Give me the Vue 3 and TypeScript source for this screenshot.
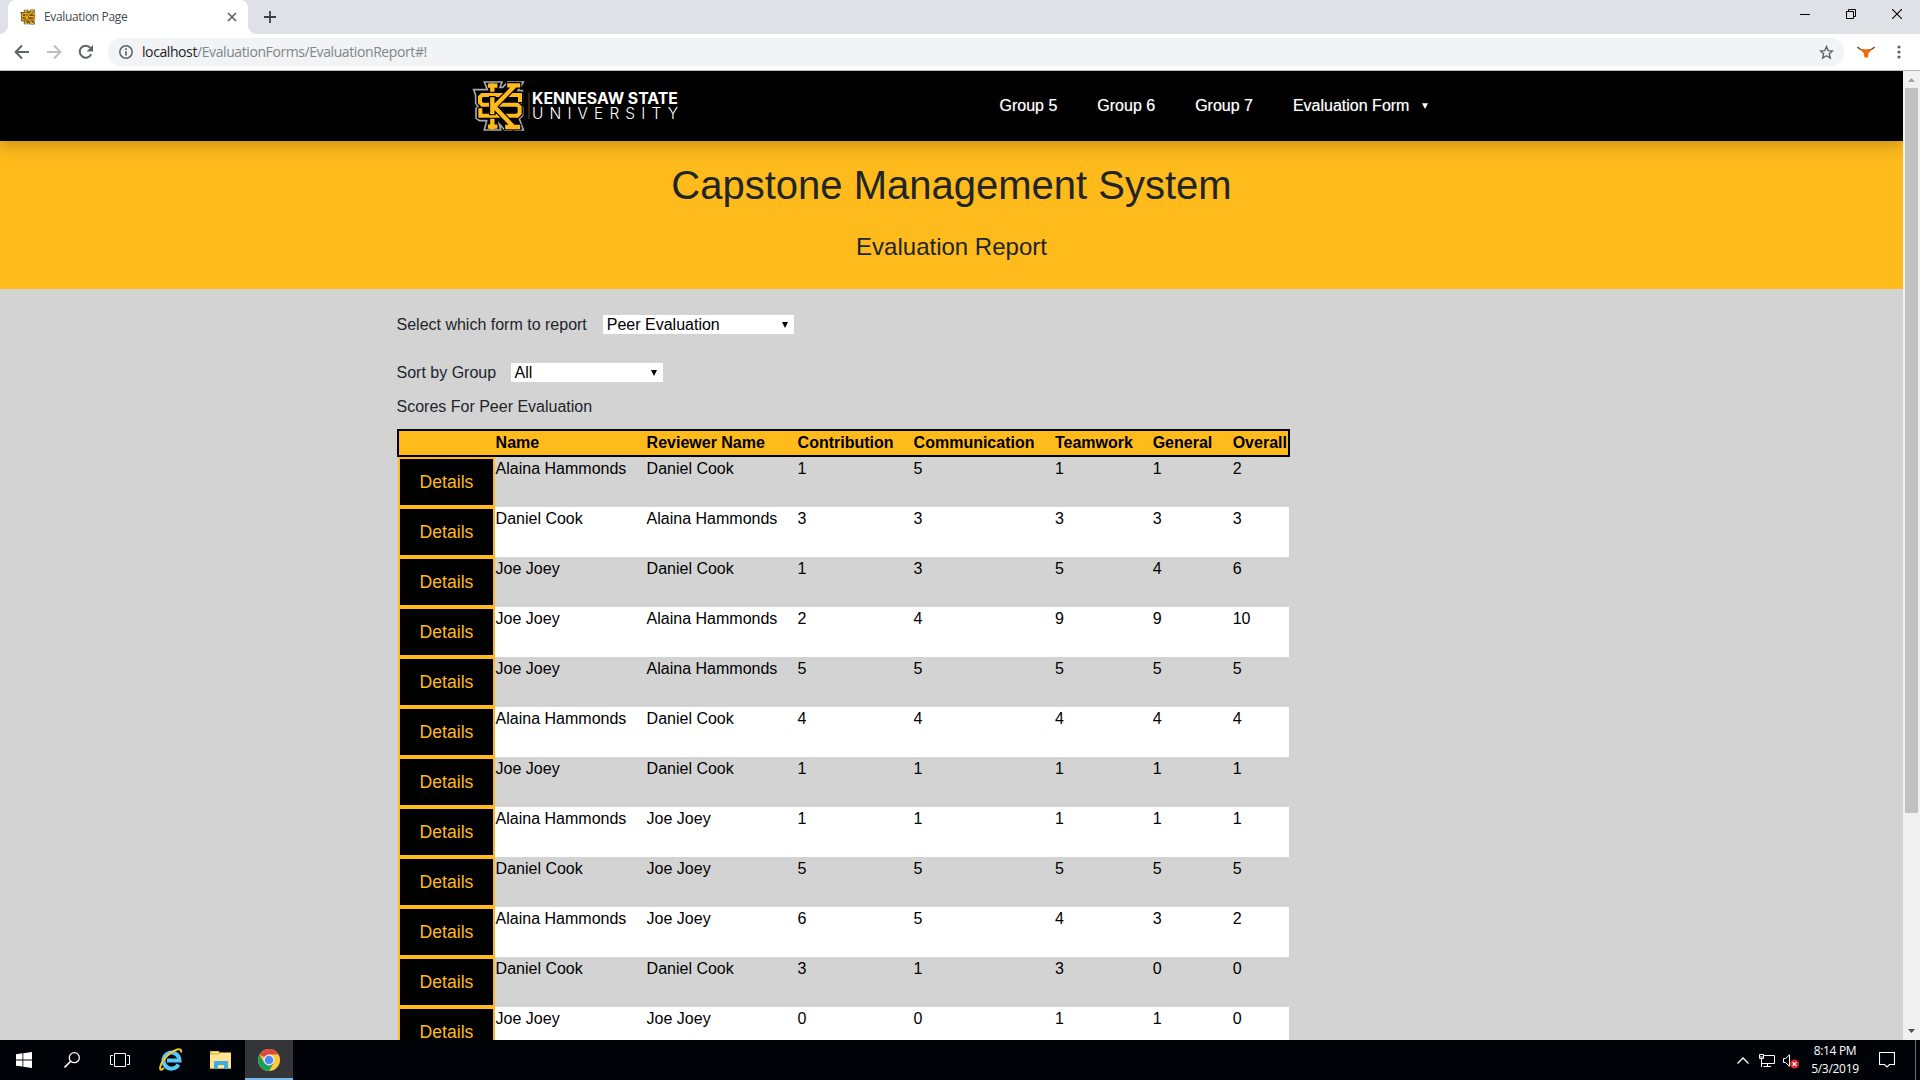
<script setup lang="ts">
interface Score {
  name: string
  reviewer: string
  marks: number[]
}

const columns: string[] = ['', 'Name', 'Reviewer Name', 'Contribution', 'Communication', 'Teamwork', 'General', 'Overall']
const groups: string[] = ['Group 5', 'Group 6', 'Group 7']

const A = 'Alaina Hammonds'
const D = 'Daniel Cook'
const J = 'Joe Joey'

const scores: Score[] = [
  { name: A, reviewer: D, marks: [1, 5, 1, 1, 2] },
  { name: D, reviewer: A, marks: [3, 3, 3, 3, 3] },
  { name: J, reviewer: D, marks: [1, 3, 5, 4, 6] },
  { name: J, reviewer: A, marks: [2, 4, 9, 9, 10] },
  { name: J, reviewer: A, marks: [5, 5, 5, 5, 5] },
  { name: A, reviewer: D, marks: [4, 4, 4, 4, 4] },
  { name: J, reviewer: D, marks: [1, 1, 1, 1, 1] },
  { name: A, reviewer: J, marks: [1, 1, 1, 1, 1] },
  { name: D, reviewer: J, marks: [5, 5, 5, 5, 5] },
  { name: A, reviewer: J, marks: [6, 5, 4, 3, 2] },
  { name: D, reviewer: D, marks: [3, 1, 3, 0, 0] },
  { name: J, reviewer: J, marks: [0, 0, 1, 1, 0] },
]

// Outline and centre lines of the interlocking monogram
const emblemShape =
  'M73 36H126L120 52H128L143 36H190L174 62H187V96L180 103L188 112V136L178 146L190 180H134L118 162L122 180H73L80 152H58L48 144V116L54 110L47 99V76L41 59H82Z'
const emblemS = 'M180 90V75H66L60 81V97L67 104H172L179 111V130L172 137H61V121'
const emblemStem = 'M90 47H106M97 46V171M90 170H106'
const emblemArms = 'M148 46H174M142 171H174M164 48L103 110L160 170M97 88V126'
</script>

<template>
  <div class="screen">
    <!-- tab strip -->
    <div class="tabstrip">
      <div class="tab">
        <svg class="favicon" width="16" height="16" viewBox="38 30 160 156">
          <g fill="none" stroke-linecap="square">
            <path :d="emblemShape" fill="#5d5849" />
            <path :d="emblemStem" stroke="#f5b01a" stroke-width="13" />
            <path :d="emblemS" stroke="#5a4510" stroke-width="20" />
            <path :d="emblemS" stroke="#f5b01a" stroke-width="13" />
            <path :d="emblemArms" stroke="#5a4510" stroke-width="20" />
            <path :d="emblemArms" stroke="#f5b01a" stroke-width="13" />
          </g>
        </svg>
        <span class="tab-title">Evaluation Page</span>
        <svg class="tab-close" width="10" height="10" viewBox="0 0 10 10"><path d="M1 1l8 8M9 1l-8 8" stroke="#5f6368" stroke-width="1.7" /></svg>
      </div>
      <svg class="new-tab" width="12" height="12" viewBox="0 0 12 12"><path d="M6 0v12M0 6h12" stroke="#3c4043" stroke-width="1.8" /></svg>
      <div class="window-buttons">
        <svg width="10" height="10" viewBox="0 0 10 10"><path d="M0 5.5h10" stroke="#000" /></svg>
        <svg width="10" height="10" viewBox="0 0 10 10" fill="none" stroke="#000"><path d="M.5 2.5h7v7h-7zM2.5 2.5v-2h7v7h-2" /></svg>
        <svg width="10" height="10" viewBox="0 0 10 10"><path d="M0 0l10 10M10 0L0 10" stroke="#000" stroke-width="1.1" /></svg>
      </div>
    </div>

    <!-- toolbar -->
    <div class="toolbar">
      <svg class="nav-icon" width="16" height="16" viewBox="0 0 16 16" fill="none" stroke="#5f6368" stroke-width="2"><path d="M15 8H2M8 1.5L1.6 8L8 14.5" /></svg>
      <svg class="nav-icon" width="16" height="16" viewBox="0 0 16 16" fill="none" stroke="#bdbfc1" stroke-width="2"><path d="M1 8h13M8 1.5L14.4 8L8 14.5" /></svg>
      <svg class="nav-icon" width="16" height="16" viewBox="0 0 16 16"><path d="M13.2 10.2A6 6 0 1 1 12.4 3.9" fill="none" stroke="#5f6368" stroke-width="2" /><path d="M15 1v6.4H8.6z" fill="#5f6368" /></svg>
      <div class="omnibox">
        <svg width="14" height="14" viewBox="0 0 14 14" fill="none" stroke="#5f6368"><circle cx="7" cy="7" r="6.2" stroke-width="1.5" /><path d="M7 6.2v4.2M7 3.3v1.6" stroke-width="1.7" /></svg>
        <span class="url"><b>localhost</b>/EvaluationForms/EvaluationReport#!</span>
        <svg class="star" width="15" height="15" viewBox="0 0 15 15"><path d="M7.5 1.6l1.7 4 4.3.4-3.2 2.8 1 4.2-3.8-2.3-3.8 2.3 1-4.2L1.500 6l4.300-.4z" fill="none" stroke="#5f6368" stroke-width="1.4" /></svg>
      </div>
      <svg class="longhorn" width="18" height="12" viewBox="0 0 18 12"><path d="M.3 1Q3 4 6.500 4M17.700 1Q15 4 11.500 4" fill="none" stroke="#8a4a22" stroke-width="1.600" /><path d="M4 3.500Q9 3 14 3.500L13.500 5.600L11.500 7L11 11.500H7.500L6.800 7L4.800 5.600z" fill="#f26a0a" /></svg>
      <svg class="menu-dots" width="4" height="14" viewBox="0 0 4 14" fill="#5f6368"><circle cx="2" cy="2" r="1.6" /><circle cx="2" cy="7" r="1.6" /><circle cx="2" cy="12" r="1.6" /></svg>
    </div>

    <!-- page -->
    <div class="viewport">
      <div class="page">
        <header class="site-header">
          <svg class="logo" width="212" height="54" viewBox="470 79 212 54">
            <g fill="none" stroke-linecap="square" transform="translate(460 70) scale(0.3333)">
              <path :d="emblemShape" fill="#000" stroke="#a7a9ac" stroke-width="5" stroke-linecap="butt" />
              <path :d="emblemStem" stroke="#ffbb1c" stroke-width="13" />
              <path :d="emblemS" stroke="#000" stroke-width="19" />
              <path :d="emblemS" stroke="#ffbb1c" stroke-width="12" />
              <path :d="emblemArms" stroke="#000" stroke-width="20" />
              <path :d="emblemArms" stroke="#ffbb1c" stroke-width="13" />
            </g>
            <path d="M529 92.500v26.500" stroke="#6d5010" stroke-width="1" />
            <text x="532" y="103.500" font-size="15.500" font-weight="700" textLength="146" lengthAdjust="spacingAndGlyphs">KENNESAW STATE</text>
            <text x="532" y="118.500" font-size="15.500" font-weight="300" textLength="146" lengthAdjust="spacing">UNIVERSITY</text>
          </svg>
          <nav class="site-nav">
            <a v-for="g in groups" :key="g">{{ g }}</a>
            <a>Evaluation Form<svg class="caret" width="6" height="6" viewBox="0 0 6 6"><path d="M0 .3h6L3 6z" fill="#fff" /></svg></a>
          </nav>
        </header>
        <section class="banner">
          <h1>Capstone Management System</h1>
          <h2>Evaluation Report</h2>
        </section>
        <main class="report">
          <div class="field">
            <label>Select which form to report</label>
            <div class="select select-form">Peer Evaluation<svg width="6" height="6" viewBox="0 0 6 6"><path d="M0 0h6L3 6z" /></svg></div>
          </div>
          <div class="field field-group">
            <label>Sort by Group</label>
            <div class="select select-group">All<svg width="6" height="6" viewBox="0 0 6 6"><path d="M0 0h6L3 6z" /></svg></div>
          </div>
          <p class="caption">Scores For Peer Evaluation</p>
          <div class="table">
            <div class="row head">
              <span v-for="c in columns" :key="c">{{ c }}</span>
            </div>
            <div v-for="(s, i) in scores" :key="i" class="row body">
              <button type="button">Details</button>
              <span>{{ s.name }}</span>
              <span>{{ s.reviewer }}</span>
              <span v-for="(m, k) in s.marks" :key="k">{{ m }}</span>
            </div>
          </div>
        </main>
      </div>
      <div class="scrollbar">
        <svg width="17" height="17" viewBox="0 0 17 17"><path d="M5 11l3.500-4l3.500 4z" fill="#a3a3a3" /></svg>
        <div class="thumb"></div>
        <svg width="17" height="17" viewBox="0 0 17 17"><path d="M5 6l3.500 4L12 6z" fill="#505050" /></svg>
      </div>
    </div>

    <!-- taskbar -->
    <footer class="taskbar">
      <div class="task"><svg width="16" height="16" viewBox="0 0 16 16" fill="#fff"><path d="M0 2.300L6.500 1.300V7.500H0zM7.300 1.200L16 0V7.500H7.300zM0 8.400h6.500v6.200L0 13.700zM7.300 8.400H16V16L7.300 14.800z" /></svg></div>
      <div class="task"><svg width="16" height="16" viewBox="0 0 16 16" fill="none" stroke="#fff" stroke-width="1.300"><circle cx="10.300" cy="5.700" r="5" /><path d="M6.700 9.300L.5 15.500" stroke-width="1.600" /></svg></div>
      <div class="task"><svg width="20" height="14" viewBox="0 0 20 14" fill="none" stroke="#fff"><path d="M4.500.5h11v13h-11zM3 2.500H.5v9H3M17 2.500h2.500v9H17" /></svg></div>
      <div class="task task-ie">
        <svg width="24" height="24" viewBox="0 0 24 24" fill="none">
          <path d="M19.500 16.500A8 8 0 1 1 20.500 12.500H8" stroke="#58c8f5" stroke-width="4" />
          <path d="M5 20C-1.500 26 .5 15 8.500 7.500C15 1.500 23.500-1.500 22 4.500" stroke="#f6c52c" stroke-width="2" />
        </svg>
      </div>
      <div class="task"><svg width="22" height="18" viewBox="0 0 22 18"><path d="M0 0h9l1 2h11v15.500H0z" fill="#e9b93a" /><path d="M0 3.500h9l1-2h11v16H0z" fill="#ffe391" /><path d="M2 1h6v1H2z" fill="#fff3c9" /><path d="M4 18v-8h14v8h-4v-4H8v4z" fill="#3daee3" /></svg></div>
      <div class="task active">
        <svg width="22" height="22" viewBox="0 0 22 22">
          <circle cx="11" cy="11" r="11" fill="#fcca3c" />
          <path d="M11 11L1.500 5.500A11 11 0 0 1 20.500 5.500H11z" fill="#dd4b3e" />
          <path d="M1.500 5.500A11 11 0 0 0 11 22L15.800 13.700L11 11L6.200 13.700z" fill="#1b9e5a" />
          <circle cx="11" cy="11" r="5.400" fill="#f1f1f1" /><circle cx="11" cy="11" r="4.300" fill="#4c8bf5" />
        </svg>
      </div>
      <div class="tray">
        <svg class="tray-up" width="12" height="7" viewBox="0 0 12 7" fill="none" stroke="#fff" stroke-width="1.300"><path d="M.5 6.500L6 1l5.500 5.500" /></svg>
        <svg class="tray-net" width="16" height="14" viewBox="0 0 16 14" fill="none" stroke="#fff"><path d="M5 1.500h10.500v8H3M2.500 5v8M.5.500h4v4h-4zM1 3h3M8.500 9.500v3M4.500 12.500h7.500" /></svg>
        <svg class="tray-sound" width="16" height="15" viewBox="0 0 16 15"><path d="M.5 4.500h2L6.500.8v11.400l-4-3.700h-2z" fill="none" stroke="#fff" /><circle cx="11.500" cy="10" r="4.500" fill="#e2252b" /><path d="M9.600 8.100l3.800 3.800M13.400 8.100l-3.800 3.800" stroke="#fff" stroke-width="1.300" /></svg>
        <div class="clock"><span>8:14 PM</span><span class="date">5/3/2019</span></div>
        <svg class="tray-note" width="16" height="16" viewBox="0 0 16 16" fill="none" stroke="#fff" stroke-width="1.100"><path d="M.5.500h15v12H10.500L8 15L5.500 12.500H.5z" /></svg>
        <div class="show-desktop"></div>
      </div>
    </footer>
  </div>
</template>

<style>
html,
body {
  margin: 0;
  overflow: hidden;
}
</style>

<style scoped>
.screen {
  width: 1920px;
  height: 1080px;
  display: flex;
  flex-direction: column;
  overflow: hidden;
  font-family: "Liberation Sans", Arial, sans-serif;
  font-size: 16px;
  line-height: 24px;
  color: #212529;
}
svg {
  display: block;
  flex: none;
}
.tabstrip {
  height: 34px;
  flex: none;
  background: #dee1e6;
  display: flex;
  align-items: flex-start;
}
.tab {
  position: relative;
  box-sizing: border-box;
  width: 240px;
  height: 34px;
  margin-left: 8px;
  padding: 0 11px 0 12px;
  background: #fff;
  border-radius: 8px 8px 0 0;
  display: flex;
  align-items: center;
}
.tab::before,
.tab::after {
  content: "";
  position: absolute;
  bottom: 0;
  width: 8px;
  height: 8px;
}
.tab::before {
  left: -8px;
  background: radial-gradient(circle at 0 0, transparent 7.5px, #fff 8px);
}
.tab::after {
  right: -8px;
  background: radial-gradient(circle at 100% 0, transparent 7.5px, #fff 8px);
}
.tab-title {
  margin-left: 8px;
  font: 12px/16px "Open Sans", sans-serif;
  letter-spacing: -0.35px;
  color: #45494d;
  flex: 1;
}
.new-tab {
  margin: 11px 0 0 16px;
}
.window-buttons {
  margin: 9px 18px 0 auto;
  display: flex;
  gap: 36px;
}
.toolbar {
  box-sizing: border-box;
  height: 37px;
  flex: none;
  background: #fff;
  border-bottom: 1px solid #b6b9b9;
  display: flex;
  align-items: center;
  padding-left: 14px;
}
.nav-icon {
  margin-right: 16px;
}
.omnibox {
  box-sizing: border-box;
  width: 1736px;
  height: 28px;
  margin-left: -2px;
  padding: 0 10px 0 11px;
  border-radius: 14px;
  background: #f1f3f4;
  display: flex;
  align-items: center;
}
.url {
  margin-left: 9px;
  flex: 1;
  font: 14px/20px "Open Sans", sans-serif;
  letter-spacing: -0.41px;
  color: #80868b;
}
.url b {
  font-weight: 400;
  color: #202124;
}
.longhorn {
  margin-left: 13px;
}
.menu-dots {
  margin-left: 22px;
}
.viewport {
  height: 969px;
  flex: none;
  display: flex;
  overflow: hidden;
}
.page {
  width: 1903px;
  flex: none;
  background: #d3d3d3;
  overflow: hidden;
}
.site-header {
  position: relative;
  box-sizing: border-box;
  height: 70px;
  padding-left: 470px;
  background: #000;
  box-shadow: 0 4px 16px rgba(0, 0, 0, 0.24);
  display: flex;
  align-items: center;
}
.logo text {
  font-family: Inter, sans-serif;
  fill: #fff;
}
.site-nav {
  margin-left: 297.5px;
  display: flex;
  color: #fff;
}
.site-nav a {
  padding: 0 20px;
  display: flex;
  align-items: center;
  text-shadow: 0 0 1px rgba(255, 255, 255, 0.5);
}
.caret {
  margin-left: 13px;
}
.banner {
  height: 148px;
  background: #ffbb1c;
  overflow: hidden;
  text-align: center;
}
h1,
h2 {
  margin: 0;
  font-weight: 400;
}
h1 {
  margin-top: 20px;
  font-size: 40px;
  line-height: 48px;
}
h2 {
  margin-top: 23px;
  font-size: 24px;
  line-height: 29px;
}
.report {
  padding: 23px 0 0 396.5px;
}
.field {
  display: flex;
  align-items: center;
  height: 24px;
}
.field label {
  padding-top: 2px;
}
.field-group {
  margin-top: 24px;
}
.select {
  box-sizing: border-box;
  height: 19px;
  padding: 0 6px 0 4px;
  background: #fff;
  color: #000;
  line-height: 19px;
  display: flex;
  align-items: center;
  justify-content: space-between;
  margin-top: 1px;
}
.select-form {
  width: 191px;
  margin-left: 16px;
}
.select-group {
  width: 152px;
  margin-left: 14.5px;
}
.caption {
  margin: 11px 0 0;
}
.table {
  margin: 10px 0 0 0.5px;
  width: 893px;
  color: #000;
}
.row {
  display: grid;
  grid-template-columns: 98.6px 151px 151px 116px 141.4px 97.7px 80px auto;
}
.head {
  box-sizing: border-box;
  height: 28px;
  border: 2px solid #000;
  background: #ffbb1c;
  font-weight: 700;
  grid-template-columns: 96.6px 151px 151px 116px 141.4px 97.7px 80px auto;
}
.body {
  height: 50px;
  width: 892px;
}
.body:nth-child(odd) {
  background: linear-gradient(#fff, #fff) 98px 0 no-repeat;
}
.row button {
  box-sizing: border-box;
  width: 97px;
  height: 50px;
  margin-left: 1px;
  padding: 0;
  border: 2px solid #ffbb1c;
  background: #000;
  color: #ffbb1c;
  font: 17.6px/26px "Liberation Sans", Arial, sans-serif;
}
.scrollbar {
  width: 17px;
  background: #f1f1f1;
  display: flex;
  flex-direction: column;
}
.thumb {
  width: 13px;
  height: 725px;
  margin: 0 auto auto 2px;
  background: #c1c1c1;
}
.taskbar {
  height: 40px;
  flex: none;
  background: #000308;
  display: flex;
}
.task {
  box-sizing: border-box;
  width: 48px;
  display: flex;
  align-items: center;
  justify-content: center;
}
.task-ie {
  width: 53px;
}
.task:nth-child(5) svg {
  margin-right: 1px;
}
.task.active {
  background: #343539;
  border-bottom: 2px solid #76b9ed;
  padding-top: 2px;
}
.tray {
  margin-left: auto;
  display: flex;
  align-items: center;
}
.tray-net {
  margin-left: 10px;
  margin-top: 2px;
}
.tray-sound {
  margin-left: 8px;
  margin-top: 2px;
}
.clock {
  box-sizing: border-box;
  width: 70px;
  padding-left: 2px;
  display: flex;
  flex-direction: column;
  align-items: center;
  color: #fff;
  font: 12px/18px "Open Sans", sans-serif;
  letter-spacing: -0.35px;
}
.date {
  letter-spacing: -0.3px;
}
.tray-note {
  margin-left: 10px;
}
.show-desktop {
  width: 4px;
  height: 40px;
  margin-left: 20px;
  border-left: 1px solid #6b6d70;
}
</style>
